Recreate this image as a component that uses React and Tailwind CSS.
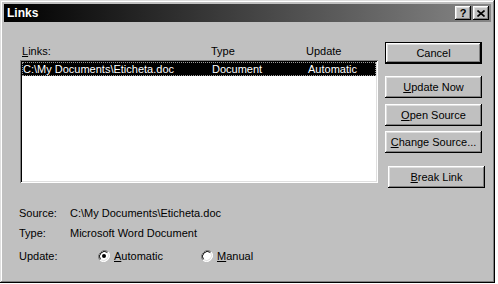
import React from "react";

const raised =
  "shadow-[inset_-1px_-1px_#000,inset_1px_1px_#fff,inset_-2px_-2px_#808080,inset_2px_2px_#dfdfdf]";

function Btn({ children, className = "", isDefault = false }) {
  if (isDefault) {
    return (
      <div className={`border border-black ${className}`}>
        <div className={`h-full w-full flex items-center justify-center bg-[#c0c0c0] ${raised}`}>
          {children}
        </div>
      </div>
    );
  }
  return (
    <div className={`flex items-center justify-center bg-[#c0c0c0] ${raised} ${className}`}>
      {children}
    </div>
  );
}

function Radio({ checked }) {
  return (
    <svg width="12" height="12" viewBox="0 0 12 12" className="block">
      <circle cx="6" cy="6" r="5.5" fill="#fff" />
      <path d="M10.2 1.8 A6 6 0 0 0 1.8 10.2" stroke="#808080" strokeWidth="1" fill="none" />
      <path d="M9.5 2.5 A5 5 0 0 0 2.5 9.5" stroke="#000" strokeWidth="1" fill="none" />
      <path d="M1.8 10.2 A6 6 0 0 0 10.2 1.8" stroke="#fff" strokeWidth="1" fill="none" />
      <path d="M2.5 9.5 A5 5 0 0 0 9.5 2.5" stroke="#dfdfdf" strokeWidth="1" fill="none" />
      {checked && <circle cx="6" cy="6" r="2" fill="#000" />}
    </svg>
  );
}

export default function App() {
  return (
    <div
      className="w-[498px] h-[284px] bg-white text-[11px] leading-[14px] text-black"
      style={{ fontFamily: '"Liberation Sans", Arial, sans-serif' }}
    >
      <div className="w-[495px] h-[283px] bg-[#c0c0c0] p-[4px] shadow-[inset_-1px_-1px_#000,inset_1px_1px_#dfdfdf,inset_-2px_-2px_#808080,inset_2px_2px_#fff]">
        {/* Title bar */}
        <div className="h-[18px] flex items-center justify-between bg-[linear-gradient(to_right,#000000,#1a1a1a_20%,#868686)] pl-[3px] pr-[2px]">
          <span className="text-white font-bold text-[12px] leading-[14px]">Links</span>
          <div className="flex items-center gap-[2px]">
            <div className={`w-[16px] h-[14px] flex items-center justify-center ${raised} bg-[#c0c0c0]`}>
              <span className="font-bold text-[11px] leading-[11px]">?</span>
            </div>
            <div className={`w-[16px] h-[14px] flex items-center justify-center ${raised} bg-[#c0c0c0]`}>
              <svg width="8" height="7" viewBox="0 0 8 7">
                <path d="M0.5 0.5 L7.5 6.5 M7.5 0.5 L0.5 6.5" stroke="#000" strokeWidth="1.6" />
              </svg>
            </div>
          </div>
        </div>

        {/* Body */}
        <div className="flex">
          <div className="ml-[16px] mt-[22px] w-[358px]">
            <div className="h-[14px] grid grid-cols-[189px_95px_1fr] pl-[2px]">
              <span><u>L</u>inks:</span>
              <span>Type</span>
              <span>Update</span>
            </div>
            <div className="mt-[2px] h-[123px] bg-white p-[2px] shadow-[inset_1px_1px_#808080,inset_-1px_-1px_#fff,inset_2px_2px_#000,inset_-2px_-2px_#dfdfdf]">
              <div className="h-[14px] bg-black text-white grid grid-cols-[189px_96px_1fr] pl-[1px] outline outline-1 outline-dotted outline-[#9a9a9a] -outline-offset-1">
                <span>C:\My Documents\Eticheta.doc</span>
                <span>Document</span>
                <span>Automatic</span>
              </div>
            </div>
          </div>

          <div className="ml-[7px] mt-[20px] flex flex-col">
            <Btn isDefault className="w-[97px] h-[22px]">Cancel</Btn>
            <Btn className="w-[97px] h-[22px] mt-[12px]"><span><u>U</u>pdate Now</span></Btn>
            <Btn className="w-[97px] h-[22px] mt-[6px]"><span><u>O</u>pen Source</span></Btn>
            <Btn className="w-[97px] h-[22px] mt-[5px]"><span><u>C</u>hange Source...</span></Btn>
            <Btn className="w-[97px] h-[22px] mt-[13px] ml-[3px]"><span><u>B</u>reak Link</span></Btn>
          </div>
        </div>

        {/* Bottom info */}
        <div className="mt-[18px] pl-[15px]">
          <div className="flex h-[14px]">
            <span className="w-[51px]">Source:</span>
            <span>C:\My Documents\Eticheta.doc</span>
          </div>
          <div className="flex h-[14px] mt-[6px]">
            <span className="w-[51px]">Type:</span>
            <span>Microsoft Word Document</span>
          </div>
          <div className="flex items-center h-[14px] mt-[9px]">
            <span className="w-[79px]">Update:</span>
            <div className="flex items-center w-[103px]">
              <Radio checked />
              <span className="ml-[4px]"><u>A</u>utomatic</span>
            </div>
            <div className="flex items-center">
              <Radio />
              <span className="ml-[4px]"><u>M</u>anual</span>
            </div>
          </div>
        </div>
      </div>
    </div>
  );
}
